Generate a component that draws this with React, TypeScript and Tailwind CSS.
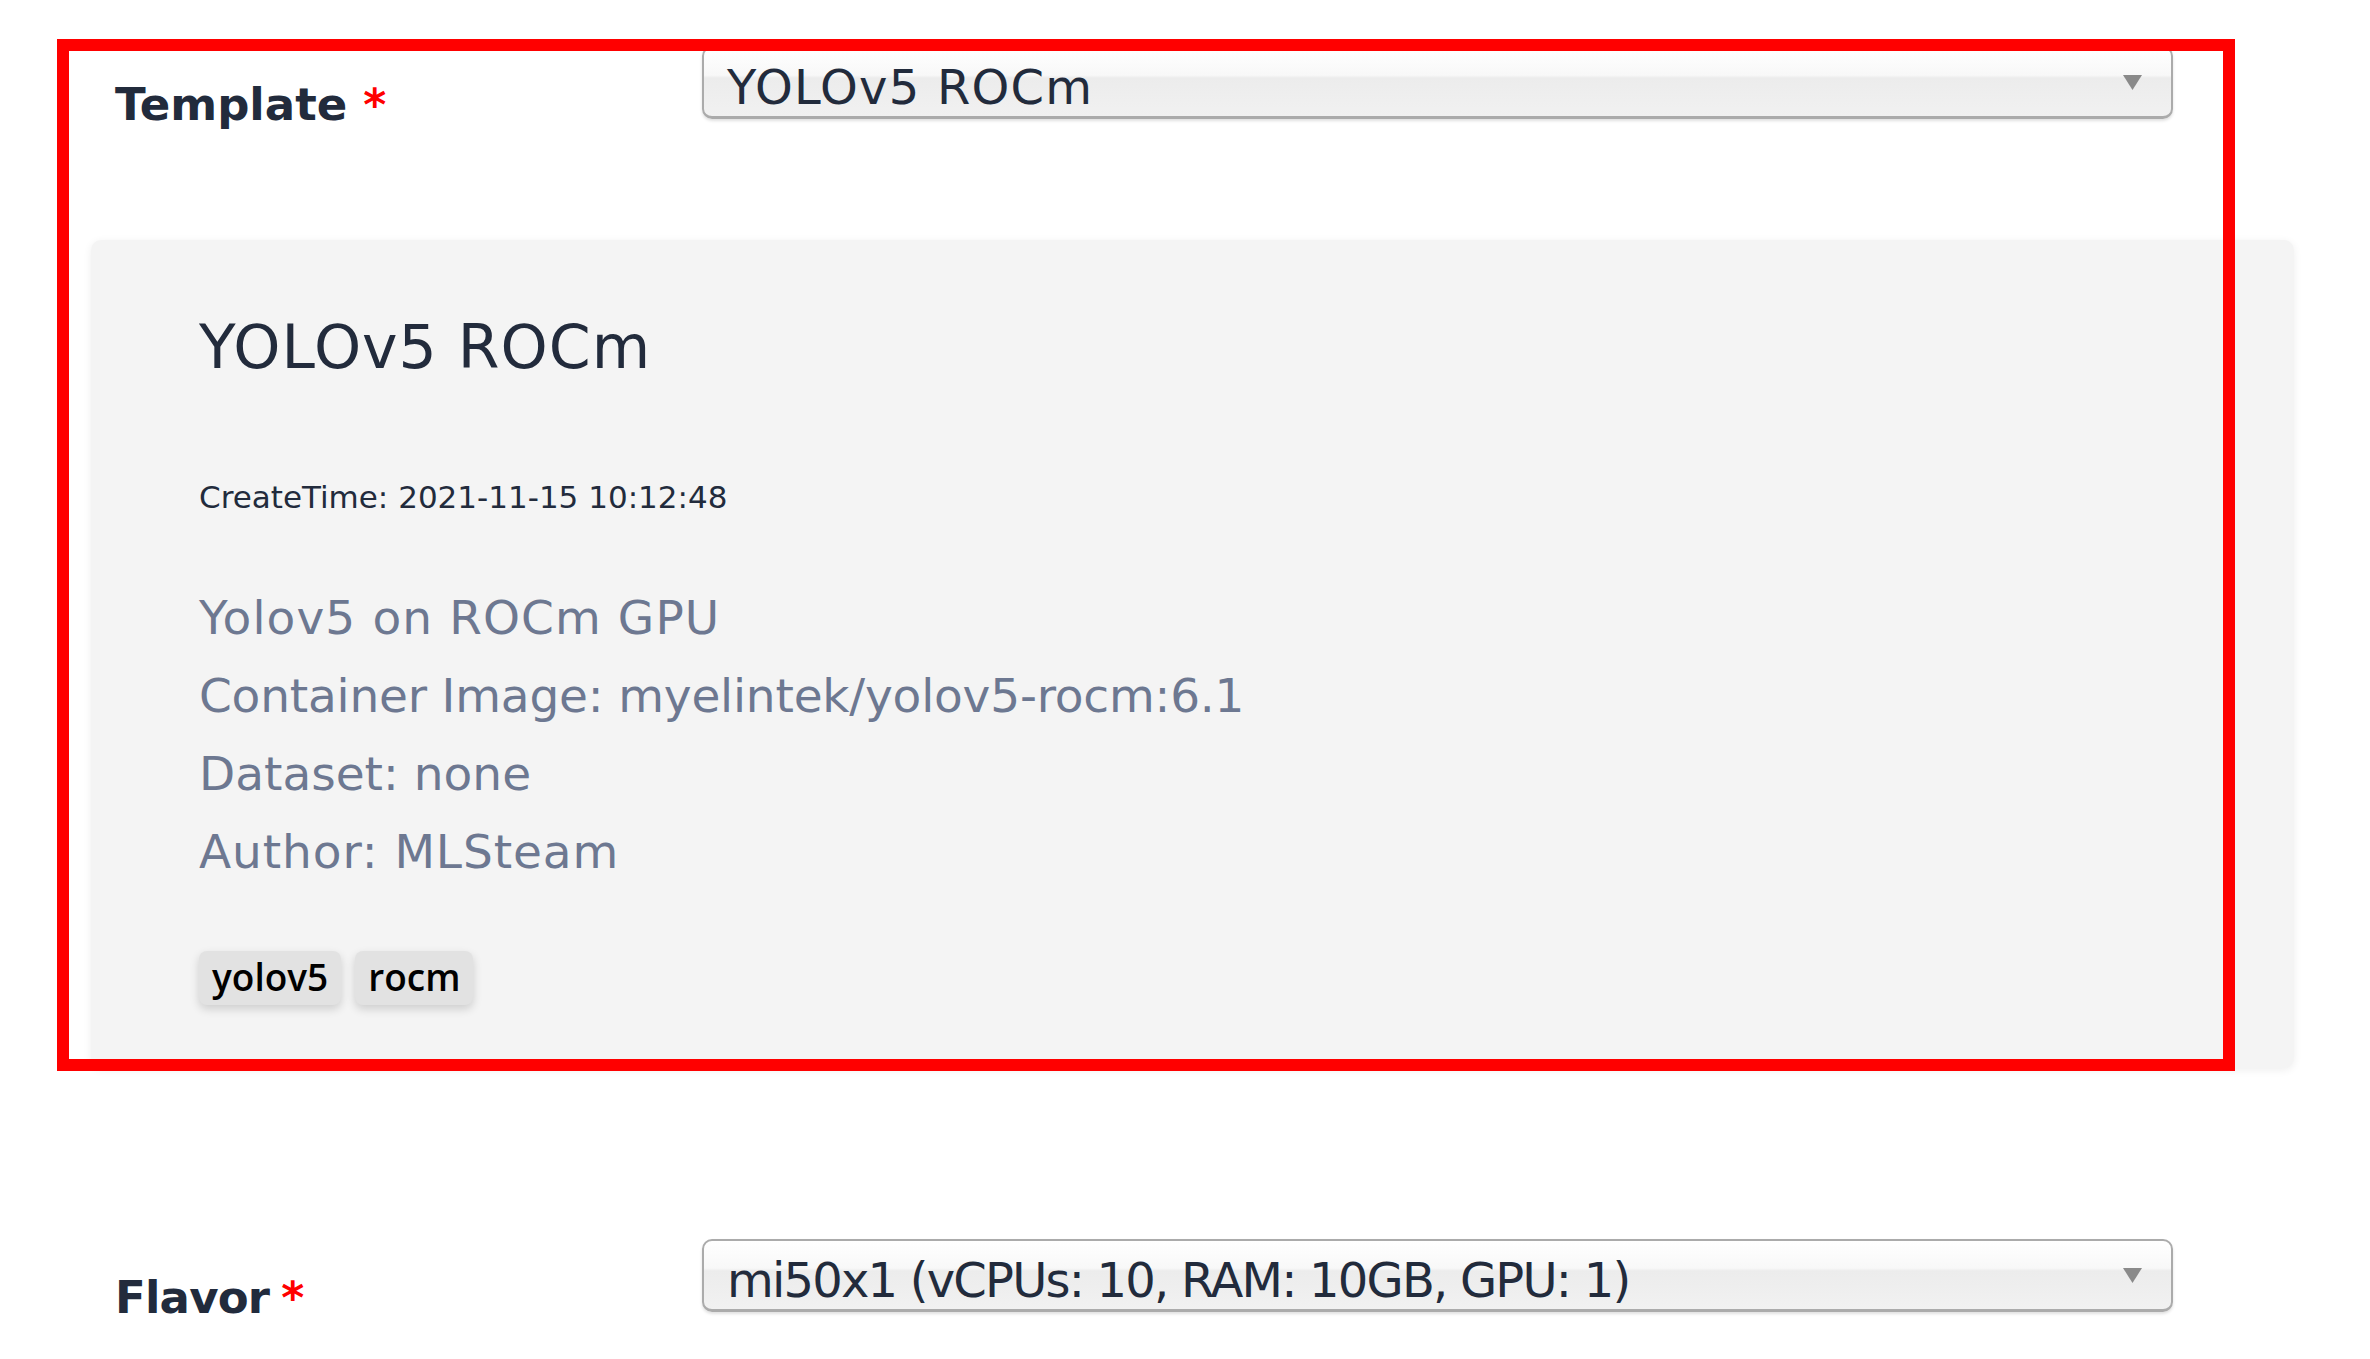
import React from "react";

const Arrow = () => (
  <svg width="19" height="15" viewBox="0 0 19 15" className="shrink-0">
    <path d="M0 0 L19 0 L9.5 15 Z" fill="#8a8a8a" />
  </svg>
);

const Select = ({ text, track }: { text: string; track: string }) => (
  <div className="flex h-[73px] w-[1471px] items-center rounded-[10px] border-2 border-[#ababab] border-b-[3px] bg-[linear-gradient(to_bottom,#ffffff_0%,#f8f8f8_40%,#ececec_44%,#f1f1f1_100%)] pl-[23px] pr-[29px] pt-[9px] shadow-[0_2px_3px_rgba(0,0,0,0.12)]">
    <span className={`flex-1 font-['DejaVu_Sans',sans-serif] text-[48px] leading-none text-[#222b3c] ${track}`}>
      {text}
    </span>
    <div className="-mt-[9px]">
      <Arrow />
    </div>
  </div>
);

const Label = ({ text, track, gap }: { text: string; track: string; gap: string }) => (
  <div className="mt-[36px] h-[37px] w-[587px] shrink-0">
    <span className={`font-['DejaVu_Sans',sans-serif] text-[45px] font-bold leading-none text-[#222b3c] ${track}`}>
      {text}
    </span>
    <span className={`font-['DejaVu_Sans',sans-serif] text-[44px] font-bold leading-none text-[#ff0000] ${gap}`}>
      *
    </span>
  </div>
);

export default function App() {
  return (
    <div className="relative h-[1359px] w-[2370px] overflow-hidden bg-white">
      <div className="flex flex-col">
        <div className="flex items-start pl-[115px] pt-[46px]">
          <Label text="Template" track="" gap="ml-[16px]" />
          <Select text="YOLOv5 ROCm" track="tracking-[1.2px]" />
        </div>

        <div className="ml-[91px] mt-[121px] h-[828px] w-[2203px] rounded-[10px] bg-[#f4f4f4] pl-[108px] pt-[77px] shadow-[0_2px_8px_rgba(0,0,0,0.07)]">
          <div className="font-['DejaVu_Sans',sans-serif] text-[60px] leading-none tracking-[1px] text-[#222b3c]">
            YOLOv5 ROCm
          </div>
          <div className="mt-[105px] font-['DejaVu_Sans',sans-serif] text-[31px] leading-none text-[#222b3c]">
            CreateTime: 2021-11-15 10:12:48
          </div>
          <div className="mt-[66px] font-['DejaVu_Sans',sans-serif] text-[47px] leading-[78px] text-[#6d7891]">
            <div className="tracking-[1.1px]">Yolov5 on ROCm GPU</div>
            <div className="tracking-[-0.2px]">Container Image: myelintek/yolov5-rocm:6.1</div>
            <div>Dataset: none</div>
            <div className="tracking-[0.9px]">Author: MLSteam</div>
          </div>
          <div className="mt-[60px] flex gap-[14px]">
            {["yolov5", "rocm"].map((t) => (
              <div
                key={t}
                className="flex h-[54px] items-center rounded-[8px] bg-[#e2e2e2] px-[13px] pb-[4px] font-['Open_Sans',sans-serif] text-[37px] font-semibold leading-none text-black shadow-[0_4px_10px_rgba(0,0,0,0.16)]"
              >
                {t}
              </div>
            ))}
          </div>
        </div>

        <div className="mt-[171px] flex items-start pl-[115px]">
          <Label text="Flavor" track="tracking-[-0.8px]" gap="ml-[12px]" />
          <Select text="mi50x1 (vCPUs: 10, RAM: 10GB, GPU: 1)" track="tracking-[-1.8px]" />
        </div>
      </div>

      <div className="pointer-events-none absolute left-[57px] top-[39px] h-[1032px] w-[2178px] border-[12px] border-[#ff0000]" />
    </div>
  );
}
